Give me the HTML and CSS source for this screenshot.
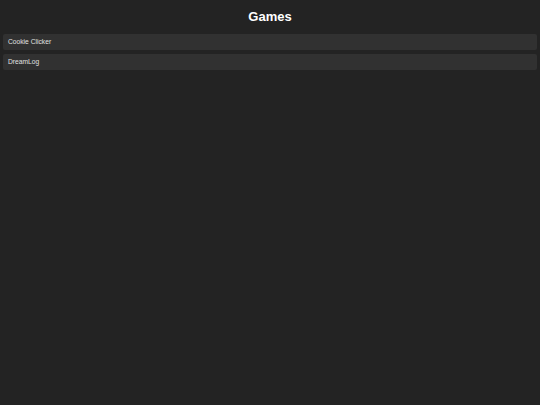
FILE: index.html
```html
<!DOCTYPE html>
<html>
<head>
<meta charset="utf-8">
<link rel="stylesheet" href="styles.css">
</head>
<body>
<div class="page">
  <h1 class="title">Games</h1>
  <ul class="list">
    <li class="item">Cookie Clicker</li>
    <li class="item">DreamLog</li>
  </ul>
</div>
</body>
</html>
```

FILE: styles.css
```css
html, body {
  margin: 0;
  padding: 0;
  background: #232323;
  height: 100%;
}
.page {
  font-family: "Liberation Sans", Arial, sans-serif;
  padding: 9px 3px 0;
}
.title {
  margin: 0 0 10px;
  font-size: 13px;
  line-height: 15px;
  font-weight: bold;
  text-align: center;
  color: #ffffff;
}
.list {
  list-style: none;
  margin: 0;
  padding: 0;
  display: flex;
  flex-direction: column;
  gap: 4px;
}
.item {
  background: #313131;
  border-radius: 2px;
  height: 16px;
  line-height: 16px;
  padding: 0 5px;
  font-size: 6.7px;
  color: #e2e2e2;
}
```
